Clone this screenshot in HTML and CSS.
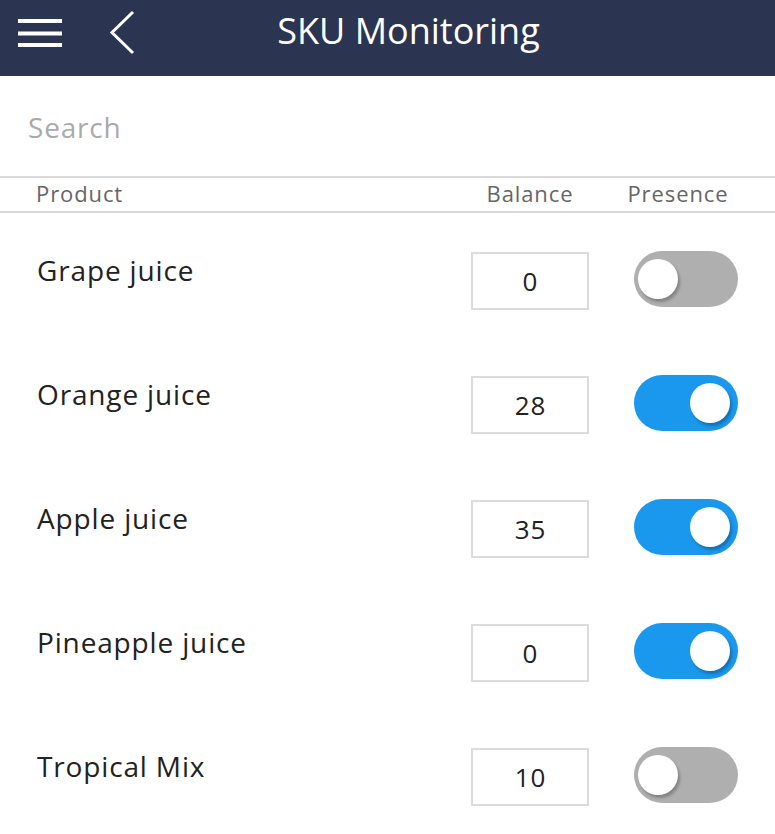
FILE: index.html
```html
<!DOCTYPE html>
<html>
<head>
<meta charset="utf-8">
<link rel="stylesheet" href="styles.css">
</head>
<body>
<header class="topbar">
  <svg class="icon-menu" width="775" height="76" viewBox="0 0 775 76">
    <g stroke="#fff" stroke-width="4" fill="none">
      <line x1="18" y1="21" x2="62" y2="21"/>
      <line x1="18" y1="33.5" x2="62" y2="33.5"/>
      <line x1="18" y1="45" x2="62" y2="45"/>
      <polyline points="133,12 112,32.5 133,53" stroke-width="3"/>
    </g>
  </svg>
  <h1 class="title">SKU Monitoring</h1>
</header>
<div class="search">Search</div>
<div class="thead">
  <span class="th-product">Product</span>
  <span class="th-balance">Balance</span>
  <span class="th-presence">Presence</span>
</div>
<div class="list">
  <div class="row"><span class="name">Grape juice</span><span class="qty">0</span><span class="toggle"><span class="knob"></span></span></div>
  <div class="row"><span class="name">Orange juice</span><span class="qty">28</span><span class="toggle on"><span class="knob"></span></span></div>
  <div class="row"><span class="name">Apple juice</span><span class="qty">35</span><span class="toggle on"><span class="knob"></span></span></div>
  <div class="row"><span class="name">Pineapple juice</span><span class="qty">0</span><span class="toggle on"><span class="knob"></span></span></div>
  <div class="row"><span class="name">Tropical Mix</span><span class="qty">10</span><span class="toggle"><span class="knob"></span></span></div>
</div>
</body>
</html>
```
FILE: styles.css
```css
* { box-sizing: border-box; }
html, body { margin: 0; padding: 0; background: #fff; }
body { font-family: "Open Sans", "Noto Sans", sans-serif; color: #222; width: 775px; height: 834px; overflow: hidden; }
.topbar { position: relative; height: 76px; background: #2b3551; display: flex; align-items: center; justify-content: center; }
.icon-menu { position: absolute; left: 0; top: 0; }
.title { margin: 0; font-weight: 400; font-size: 36px; color: #fff; line-height: 1; position: relative; top: -7px; left: 21px; }
.search { height: 102px; padding-left: 28px; display: flex; align-items: center; font-size: 28px; letter-spacing: 0.8px; color: #aaa; padding-top: 2px; border-bottom: 2px solid #d9d9d9; }
.thead { height: 35px; display: flex; align-items: center; font-size: 22px; letter-spacing: 0.9px; color: #666; border-bottom: 2px solid #d9d9d9; padding-left: 36px; padding-bottom: 3px; }
.th-product { flex: 1; }
.th-balance { width: 118px; text-align: center; margin-right: 37px; }
.th-presence { width: 104px; text-align: center; margin-right: 45px; }
.row { height: 124px; display: flex; align-items: flex-start; padding: 38px 37px 0 37px; }
.name { flex: 1; font-size: 28px; letter-spacing: 0.85px; line-height: 40px; color: #222; margin-top: -1px; }
.qty { width: 118px; height: 58px; border: 2px solid #dcdcdc; display: flex; align-items: center; justify-content: center; font-size: 26px; letter-spacing: 1px; color: #222; margin-right: 45px; margin-top: 1px; padding-left: 1px; }
.toggle { position: relative; width: 104px; height: 56px; border-radius: 28px; background: #afafaf; }
.toggle.on { background: #1a98ee; }
.knob { position: absolute; top: 8px; left: 4px; width: 40px; height: 40px; border-radius: 50%; background: #fff; box-shadow: 2px 3px 3px rgba(0,0,0,0.25); }
.toggle.on .knob { left: 56px; }
```
